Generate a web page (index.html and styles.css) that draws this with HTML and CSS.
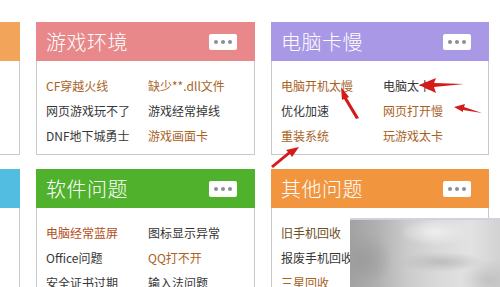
FILE: index.html
```html
<!DOCTYPE html>
<html lang="zh-CN">
<head>
    <meta charset="UTF-8">
    <title>电脑问题分类</title>
    <link rel="stylesheet" href="styles.css">
</head>
<body>
    <div class="board">
        <div class="row">
            <section class="card stub">
                <div class="card-head orange"></div>
                <div class="card-body"></div>
            </section>

            <section class="card">
                <div class="card-head pink">
                    <h2>游戏环境</h2>
                    <span class="more"><i></i><i></i><i></i></span>
                </div>
                <ul class="card-body">
                    <li class="hot">CF穿越火线</li>
                    <li class="hot">缺少**.dll文件</li>
                    <li>网页游戏玩不了</li>
                    <li>游戏经常掉线</li>
                    <li>DNF地下城勇士</li>
                    <li class="hot">游戏画面卡</li>
                </ul>
            </section>

            <section class="card">
                <div class="card-head purple">
                    <h2>电脑卡慢</h2>
                    <span class="more"><i></i><i></i><i></i></span>
                </div>
                <ul class="card-body">
                    <li class="hot">电脑开机太慢</li>
                    <li>电脑太卡</li>
                    <li>优化加速</li>
                    <li class="hot">网页打开慢</li>
                    <li class="hot">重装系统</li>
                    <li class="hot">玩游戏太卡</li>
                </ul>
            </section>
        </div>

        <div class="row">
            <section class="card stub">
                <div class="card-head blue"></div>
                <div class="card-body"></div>
            </section>

            <section class="card">
                <div class="card-head green">
                    <h2>软件问题</h2>
                    <span class="more"><i></i><i></i><i></i></span>
                </div>
                <ul class="card-body">
                    <li class="hot red">电脑经常蓝屏</li>
                    <li>图标显示异常</li>
                    <li>Office问题</li>
                    <li class="hot">QQ打不开</li>
                    <li>安全证书过期</li>
                    <li>输入法问题</li>
                </ul>
            </section>

            <section class="card">
                <div class="card-head amber">
                    <h2>其他问题</h2>
                    <span class="more"><i></i><i></i><i></i></span>
                </div>
                <ul class="card-body">
                    <li class="dark">旧手机回收</li>
                    <li></li>
                    <li>报废手机回收</li>
                    <li></li>
                    <li class="hot">三星回收</li>
                    <li></li>
                </ul>
            </section>
        </div>
    </div>

    <!-- blurred patch over the bottom right corner -->
    <div class="smudge"></div>

    <!-- red arrows drawn over the page -->
    <svg class="marks" width="500" height="287" viewBox="0 0 500 287">
        <g fill="#d41a1a">
            <polygon points="341,87 349,97 347,98 359,118 356,119 344,99 342,100"/>
            <polygon points="419,85 436,78 434,83 464,84 434,87 436,93"/>
            <polygon points="454,107 465,104 464,107 482,113 463,110 463,112"/>
            <polygon points="299,147 292,157 290,154 273,168 271,166 288,152 286,150"/>
        </g>
    </svg>
</body>
</html>
```

FILE: styles.css
```css
body {
    margin: 0;
    background-color: #fff;
    font-family: "Noto Sans CJK SC", "Liberation Sans", sans-serif;
    overflow: hidden;
}

.board {
    padding-top: 22px;
}

.row {
    display: flex;
    gap: 16px;
    margin-left: -180px;
    margin-bottom: 14px;
}

.card {
    width: 219px;
    flex-shrink: 0;
}

.card:last-child {
    width: 218px;
}

.stub {
    width: 200px;
}

.card-head {
    height: 39px;
    display: flex;
    align-items: center;
    justify-content: space-between;
    padding: 0 18px 0 10px;
}

.card-head h2 {
    margin: 0;
    font-size: 20px;
    font-weight: 300;
    color: #fff;
    letter-spacing: 0.5px;
}

.orange { background-color: #f2a45a; }
.blue   { background-color: #52bde0; }
.pink   { background-color: #e8888a; }
.purple { background-color: #a898e6; }
.green  { background-color: #4fb12c; }
.amber  { background-color: #f1953e; }

.more {
    width: 28px;
    height: 16px;
    background-color: #fff;
    border-radius: 2px;
    display: flex;
    align-items: center;
    justify-content: center;
    gap: 3px;
}

.more i {
    width: 4px;
    height: 4px;
    border-radius: 50%;
    background-color: #8a8f99;
}

.card-body {
    list-style: none;
    margin: 0;
    height: 75px;
    padding: 12px 9px 6px;
    border: 1px solid #c9c9c9;
    border-top: none;
    display: grid;
    grid-template-columns: 102px 1fr;
    grid-auto-rows: 25px;
    align-items: center;
}

.stub .card-body {
    border-left: none;
}

.card-body li {
    font-size: 12px;
    color: #363636;
    white-space: nowrap;
}

.card-body li.hot {
    color: #a8631f;
}

.card-body li.red {
    color: #b34f1c;
}

.card-body li.dark {
    color: #6e4e22;
}

.smudge {
    position: absolute;
    left: 350px;
    top: 218px;
    width: 150px;
    height: 69px;
    border-top: 2px solid #d6d0de;
    background:
        radial-gradient(ellipse 35px 14px at 85px 12px, #eeeeee, transparent),
        radial-gradient(ellipse 30px 28px at 12px 40px, #9c9c9c, transparent),
        radial-gradient(ellipse 45px 10px at 90px 42px, #bdbdbd, transparent),
        radial-gradient(ellipse 30px 20px at 140px 60px, #c2c2c2, transparent),
        linear-gradient(90deg, #a2a2a2, #b0b0b0 18%, #cbcbcb 38%, #dadada 60%, #e2e2e2 80%, #d2d2d2);
}

.marks {
    position: absolute;
    left: 0;
    top: 0;
}
```
